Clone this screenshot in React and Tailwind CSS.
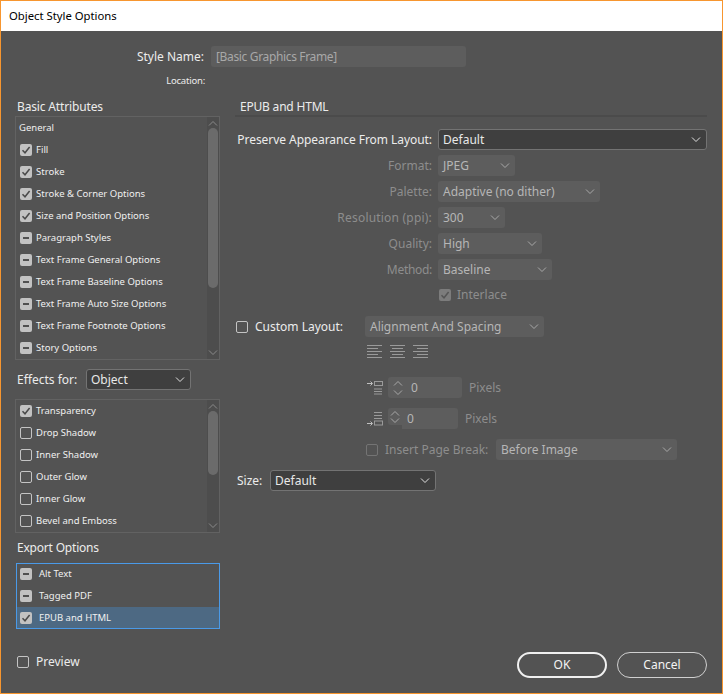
// App.jsx
const FONT = "font-['Noto_Sans','Open_Sans',sans-serif]"

/* ---- small drawings ---- */
const Chevron = ({ up, className = "" }) => (
  <svg viewBox="0 0 10 6" className={`w-[10px] h-[6px] ${className}`} fill="none" stroke="currentColor" strokeWidth="1">
    <path d={up ? "M1 5.5 L5 1.5 L9 5.5" : "M1 0.5 L5 4.5 L9 0.5"} />
  </svg>
)

const Check = ({ state = "off", dim }) => {
  if (state === "off") {
    return <span className={`block w-[12px] h-[12px] shrink-0 rounded-[2px] border ${dim ? "border-[#747474]" : "border-[#c4c4c4]"}`} />
  }
  return (
    <span className={`flex items-center justify-center w-[12px] h-[12px] shrink-0 rounded-[2px] ${dim ? "bg-[#7c7c7c]" : "bg-[#c2c2c2]"}`}>
      {state === "on" ? (
        <svg viewBox="0 0 10 10" className="w-[10px] h-[10px]" fill="none" stroke={dim ? "#555" : "#4a4a4a"} strokeWidth="1.5">
          <path d="M1.5 5.2 L4 7.8 L8.6 2" />
        </svg>
      ) : (
        <span className="block w-[6px] h-[2px] bg-[#505050]" />
      )}
    </span>
  )
}

const Select = ({ value, w, off }) => (
  <div
    className={`flex items-center justify-between h-[21px] shrink-0 rounded-[3px] pr-[5px] text-[12px] ${w} ${
      off ? "bg-[#5d5d5d] text-[#b6b6b6] pl-[5px]" : "bg-[#3f3f3f] border border-[#737373] text-[#e8e8e8] pl-[4px]"
    }`}
  >
    <span>{value}</span>
    <Chevron className={off ? "text-[#a8a8a8]" : "text-[#e0e0e0]"} />
  </div>
)

const Row = ({ state, label, indent = "gap-[4px] pl-[4px]", selected }) => (
  <div className={`flex items-center h-[22px] text-[9.5px] text-[#f0f0f0] ${indent} ${selected ? "bg-[#4d6983]" : ""}`}>
    <Check state={state} />
    <span>{label}</span>
  </div>
)

const Scrollbar = ({ thumb }) => (
  <div className="flex flex-col items-center w-[12px] shrink-0 bg-[#4d4d4d] text-[#8a8a8a]">
    <Chevron up className="mt-[3px] mb-[2px] shrink-0" />
    <div className={`w-[10px] rounded-[5px] bg-[#6b6b6b] ${thumb}`} />
    <Chevron className="mt-auto mb-[3px] shrink-0" />
  </div>
)

const FormRow = ({ label, off, track = "", children }) => (
  <div className="flex items-center gap-[6px]">
    <span className={`w-[197px] text-right text-[12px] ${track} ${off ? "text-[#8d8d8d]" : "text-[#ececec]"}`}>{label}</span>
    {children}
  </div>
)

const AlignIcon = ({ lines }) => (
  <svg viewBox="0 0 16 14" className="w-[16px] h-[14px]" stroke="#9a9a9a" strokeWidth="1">
    {lines.map(([a, b], i) => <path key={i} d={`M${a} ${0.5 + i * 3}H${b}`} />)}
  </svg>
)

export default function App() {
  const basic = [
    ["on", "Fill"], ["on", "Stroke"], ["on", "Stroke & Corner Options"], ["on", "Size and Position Options"],
    ["mix", "Paragraph Styles"], ["mix", "Text Frame General Options"], ["mix", "Text Frame Baseline Options"],
    ["mix", "Text Frame Auto Size Options"], ["mix", "Text Frame Footnote Options"], ["mix", "Story Options"],
  ]
  const effects = [
    ["on", "Transparency"], ["off", "Drop Shadow"], ["off", "Inner Shadow"],
    ["off", "Outer Glow"], ["off", "Inner Glow"], ["off", "Bevel and Emboss"],
  ]

  return (
    <div className={`w-[723px] h-[694px] flex flex-col border border-[#f7962f] bg-[#535353] overflow-hidden ${FONT}`}>
      {/* Title bar */}
      <div className="h-[30px] shrink-0 bg-white flex items-center pl-[8px] text-[11.3px] text-black">Object Style Options</div>

      <div className="flex flex-col flex-1 pl-[14px]">
        {/* Style name */}
        <div className="flex items-center h-[21px] mt-[15px]">
          <span className="w-[189px] text-right text-[12px] text-[#ececec]">Style Name:</span>
          <div className="ml-[7px] flex items-center w-[255px] h-[21px] rounded-[3px] bg-[#5d5d5d] pl-[5px] text-[12px] tracking-[-0.35px] text-[#a8a8a8]">[Basic Graphics Frame]</div>
        </div>
        <div className="flex items-center h-[13px] mt-[8px]">
          <span className="w-[190px] text-right text-[9.5px] tracking-[-0.2px] text-[#ececec]">Location:</span>
        </div>

        <div className="flex mt-[9px]">
          {/* Left column */}
          <div className="w-[205px] shrink-0 flex flex-col">
            <div className="h-[19px] pl-[2px] text-[12px] tracking-[-0.15px] leading-[19px] text-[#ececec]">Basic Attributes</div>
            <div className="flex h-[244px] border border-[#626262]">
              <div className="flex-1">
                <div className="flex items-center h-[22px] pl-[3px] text-[9.5px] text-[#f0f0f0]">General</div>
                {basic.map(([s, l]) => <Row key={l} state={s} label={l} />)}
              </div>
              <Scrollbar thumb="h-[160px]" />
            </div>

            <div className="flex items-center h-[21px] mt-[9px] pl-[2px]">
              <span className="w-[69px] text-[12px] text-[#ececec]">Effects for:</span>
              <Select value="Object" w="w-[105px]" />
            </div>

            <div className="flex h-[134px] mt-[9px] border border-[#626262]">
              <div className="flex-1">
                {effects.map(([s, l]) => <Row key={l} state={s} label={l} />)}
              </div>
              <Scrollbar thumb="h-[64px]" />
            </div>

            <div className="h-[30px] pl-[2px] text-[12px] tracking-[-0.2px] leading-[30px] text-[#ececec]">Export Options</div>
            <div className="h-[66px] ml-px border border-[#4a9ae8] overflow-hidden">
              <div className="-mt-px">
                <Row state="mix" label="Alt Text" indent="gap-[7px] pl-[3px]" />
                <Row state="mix" label="Tagged PDF" indent="gap-[7px] pl-[3px]" />
                <Row state="on" label="EPUB and HTML" indent="gap-[7px] pl-[3px]" selected />
              </div>
            </div>

            <div className="flex items-center gap-[7px] h-[14px] mt-[26px] pl-[2px] text-[12px] text-[#ececec]">
              <Check />
              <span>Preview</span>
            </div>
          </div>

          {/* Right column */}
          <div className="ml-[15px] w-[472px] flex flex-col">
            <div className="h-[20px] pl-[5px] border-b-2 border-[#4b4b4b] text-[12px] tracking-[-0.2px] leading-[20px] text-[#ececec]">EPUB and HTML</div>
            <div className="flex flex-col gap-[5px] mt-[12px]">
              <FormRow label="Preserve Appearance From Layout:" track="tracking-[-0.06px]"><Select value="Default" w="w-[269px]" /></FormRow>
              <FormRow label="Format:" off><Select value="JPEG" w="w-[77px]" off /></FormRow>
              <FormRow label="Palette:" off><Select value="Adaptive (no dither)" w="w-[162px]" off /></FormRow>
              <FormRow label="Resolution (ppi):" off track="tracking-[0.2px]"><Select value="300" w="w-[67px]" off /></FormRow>
              <FormRow label="Quality:" off><Select value="High" w="w-[104px]" off /></FormRow>
              <FormRow label="Method:" off track="tracking-[-0.3px]"><Select value="Baseline" w="w-[114px]" off /></FormRow>
            </div>
            <div className="flex items-center gap-[6px] h-[21px] mt-[4px] pl-[204px] text-[12px] text-[#8d8d8d]">
              <Check state="on" dim />
              <span>Interlace</span>
            </div>

            <div className="flex items-center h-[21px] mt-[11px] pl-px">
              <Check />
              <span className="ml-[7px] w-[110px] text-[12px] text-[#ececec]">Custom Layout:</span>
              <Select value="Alignment And Spacing" w="w-[179px]" off />
            </div>

            <div className="flex items-center gap-[7px] h-[14px] mt-[8px] pl-[132px]">
              <AlignIcon lines={[[0, 15], [0, 11], [0, 15], [0, 11], [0, 15]]} />
              <AlignIcon lines={[[0, 15], [2, 13], [0, 15], [2, 13], [0, 15]]} />
              <AlignIcon lines={[[0, 15], [4, 15], [0, 15], [4, 15], [0, 15]]} />
            </div>

            {/* Spacing before */}
            <div className="flex items-center h-[21px] mt-[18px] pl-[132px]">
              <svg viewBox="0 0 17 14" className="w-[17px] h-[14px] mr-[4px]" fill="none" stroke="#9a9a9a" strokeWidth="1">
                <path d="M0 2.5H5M3.5 0.5L5.5 2.5L3.5 4.5" stroke="#c0c0c0" />
                <rect x="7.5" y="0.5" width="8" height="4" />
                <path d="M7 8H15M7 10.5H15M7 13H15" />
              </svg>
              <div className="flex items-center w-[74px] h-[21px] rounded-[3px] bg-[#5d5d5d] text-[12px] text-[#b6b6b6]">
                <div className="flex flex-col items-center gap-[4px] w-[20px] text-[#a8a8a8]">
                  <Chevron up />
                  <Chevron />
                </div>
                <span className="ml-[3px]">0</span>
              </div>
              <span className="ml-[7px] text-[12px] text-[#8d8d8d]">Pixels</span>
            </div>

            {/* Spacing after: the stepper is shorter than the field here */}
            <div className="flex items-center h-[21px] mt-[10px] pl-[132px]">
              <svg viewBox="0 0 17 14" className="w-[17px] h-[14px] mr-[4px]" fill="none" stroke="#9a9a9a" strokeWidth="1">
                <path d="M7 0.5H15M7 3.5H15M7 6.5H15" />
                <path d="M0 11.5H5M3.5 9.5L5.5 11.5L3.5 13.5" stroke="#c0c0c0" />
                <rect x="7.5" y="9" width="8" height="4" />
              </svg>
              <div className="flex w-[70px] h-[21px] text-[12px] text-[#b6b6b6]">
                <div className="flex flex-col items-center justify-center gap-[2px] w-[14px] h-[17px] rounded-l-[3px] bg-[#5d5d5d] text-[#a8a8a8]">
                  <Chevron up />
                  <Chevron />
                </div>
                <div className="flex items-center flex-1 rounded-r-[3px] bg-[#5d5d5d] pl-[5px]">0</div>
              </div>
              <span className="ml-[7px] text-[12px] text-[#8d8d8d]">Pixels</span>
            </div>

            <div className="flex items-center h-[21px] mt-[10px] pl-[131px]">
              <Check dim />
              <span className="ml-[7px] w-[111px] text-[12px] text-[#8d8d8d]">Insert Page Break:</span>
              <Select value="Before Image" w="w-[181px]" off />
            </div>

            <div className="flex items-center h-[21px] mt-[10px] pl-[2px]">
              <span className="w-[33px] text-[12px] text-[#ececec]">Size:</span>
              <Select value="Default" w="w-[166px]" />
            </div>

            {/* Buttons */}
            <div className="flex justify-end gap-[10px] mt-[161px]">
              <button className="w-[90px] h-[26px] rounded-[13px] border-2 border-[#f0f0f0] text-[12px] text-[#f4f4f4]">OK</button>
              <button className="w-[90px] h-[26px] rounded-[13px] border border-[#d0d0d0] text-[12px] text-[#f4f4f4]">Cancel</button>
            </div>
          </div>
        </div>
      </div>
    </div>
  )
}
